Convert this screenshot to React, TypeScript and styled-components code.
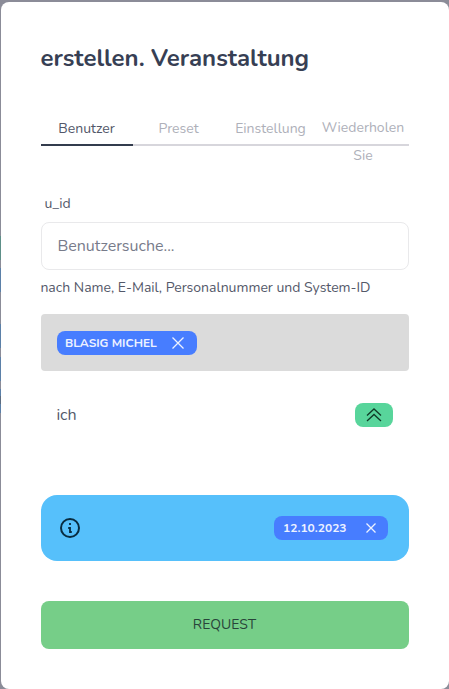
import React from "react";
import styled, { createGlobalStyle } from "styled-components";

const GlobalStyle = createGlobalStyle`
  * { box-sizing: border-box; }
  body {
    margin: 0;
    overflow: hidden;
    font-family: Nunito, Lato, "Open Sans", sans-serif;
    color: #394e6a;
  }
  button, input { font-family: inherit; }
`;

const Backdrop = styled.main`
  height: 689px;
  padding: 2px 0 0 1px;
  background:
    linear-gradient(
      #8b8c98 0 236px, #5d8f88 236px 260px, #8b8c98 260px 268px, #5b80a8 268px 292px,
      #8b8c98 292px 324px, #5b80a8 324px 348px, #8b8c98 348px 357px, #5b80a8 357px 381px,
      #8b8c98 381px 389px, #5b80a8 389px 396px, #5c6c80 396px 404px, #5b80a8 404px 413px, #8b8c98 413px
    ) 0 0 / 1px 100% no-repeat,
    #8b8c98;
`;

const Dialog = styled.section`
  display: flex;
  flex-direction: column;
  height: 687px;
  padding: 40px;
  background: #fff;
  border-radius: 8px;
  text-indent: -0.6px;
`;

const Title = styled.h1`
  margin: 0;
  font-size: 24px;
  line-height: 32px;
  font-weight: 700;
  color: #373f54;
`;

const Tabs = styled.nav`
  display: grid;
  grid-template-columns: repeat(4, 92px);
  height: 32px;
  margin-top: 40px;
`;

const Tab = styled.button<{ $active?: boolean; $wrapped?: boolean }>`
  display: flex;
  justify-content: center;
  height: 32px;
  padding: ${(p) => (p.$wrapped ? "0" : "1px 1px 0 0")};
  border: 0;
  border-bottom: 2px solid ${(p) => (p.$active ? "#333c4d" : "#d7d6dc")};
  background: none;
  font-size: 14px;
  line-height: 28px;
  text-align: center;
  color: ${(p) => (p.$active ? "#525769" : "#aeb0b9")};
`;

const Label = styled.label`
  margin-top: 48px;
  padding-left: 4px;
  font-size: 14px;
  line-height: 20px;
  color: #535869;
`;

const SearchInput = styled.input`
  height: 48px;
  margin-top: 8px;
  padding: 0 16px 0 15.4px;
  border: 1px solid #e9e9eb;
  border-radius: 8px;
  background: #fff;
  font-size: 16px;
  outline: none;
  &::placeholder { color: #777b8a; opacity: 1; }
`;

const Hint = styled.p`
  margin: 8px 0 0;
  font-size: 14px;
  line-height: 20px;
  color: #535869;
`;

const Selection = styled.div`
  display: flex;
  align-items: center;
  height: 57px;
  margin-top: 16px;
  padding: 1px 16px 0;
  border-radius: 4px;
  background: #dbdbdb;
`;

const Chip = styled.span<{ $width: number; $gap: number; $inset: number }>`
  display: flex;
  align-items: center;
  gap: ${(p) => p.$gap}px;
  width: ${(p) => p.$width}px;
  height: 24px;
  padding-left: ${(p) => p.$inset}px;
  border-radius: 8px;
  background: #477dff;
  color: #edf2ff;
  font-size: 12px;
  font-weight: 700;
  text-indent: 0;
  white-space: nowrap;
`;

const Result = styled.div`
  display: flex;
  align-items: center;
  justify-content: space-between;
  height: 48px;
  margin-top: 20px;
  padding: 0 16px;
  font-size: 16px;
  color: #535869;
`;

const RaiseButton = styled.button`
  display: grid;
  place-items: center;
  width: 38px;
  height: 24px;
  padding: 0;
  border: 0;
  border-radius: 8px;
  background: #58d59b;
  color: #103b28;
`;

const InfoBar = styled.div`
  display: flex;
  align-items: center;
  justify-content: space-between;
  height: 66px;
  margin-top: 57px;
  padding: 0 21px 0 17px;
  border-radius: 16px;
  background: #56c0fb;
  color: #082c40;
`;

const RequestButton = styled.button`
  height: 48px;
  margin-top: 40px;
  padding: 0 1px 1px 0;
  border: 0;
  border-radius: 8px;
  background: #76ce88;
  color: #28443a;
  font-size: 14px;
`;

const Cross = ({ size }: { size: number }) => (
  <svg width={size} height={size} viewBox={`0 0 ${size} ${size}`} fill="none" stroke="currentColor" strokeWidth="1.3">
    <path d={`M.5.5 ${size - 0.5} ${size - 0.5}M${size - 0.5}.5.5 ${size - 0.5}`} />
  </svg>
);

export default function App() {
  return (
    <>
      <GlobalStyle />
      <Backdrop>
        <Dialog>
          <Title>erstellen. Veranstaltung</Title>
          <Tabs>
            <Tab $active>Benutzer</Tab>
            <Tab>Preset</Tab>
            <Tab>Einstellung</Tab>
            <Tab $wrapped>Wiederholen<br />Sie</Tab>
          </Tabs>
          <Label htmlFor="user-search">u_id</Label>
          <SearchInput id="user-search" placeholder="Benutzersuche..." />
          <Hint>nach Name, E-Mail, Personalnummer und System-ID</Hint>
          <Selection>
            <Chip $width={140} $gap={15} $inset={8}>
              BLASIG MICHEL
              <Cross size={12} />
            </Chip>
          </Selection>
          <Result>
            ich
            <RaiseButton aria-label="ich">
              <svg width="16" height="16" viewBox="0 0 16 16" fill="none" stroke="currentColor" strokeWidth="1.3">
                <path d="M1 8.5 8 2l7 6.5M1 14l7-6.5 7 6.5" />
              </svg>
            </RaiseButton>
          </Result>
          <InfoBar>
            <svg width="24" height="24" viewBox="0 0 24 24" fill="none" stroke="currentColor" strokeWidth="2">
              <circle cx="12" cy="12" r="9" />
              <path d="M12 7.1v1.8M10.2 12H12v4h1.8" strokeWidth="1.8" />
            </svg>
            <Chip $width={114} $gap={19} $inset={9}>
              12.10.2023
              <Cross size={10} />
            </Chip>
          </InfoBar>
          <RequestButton>REQUEST</RequestButton>
        </Dialog>
      </Backdrop>
    </>
  );
}
